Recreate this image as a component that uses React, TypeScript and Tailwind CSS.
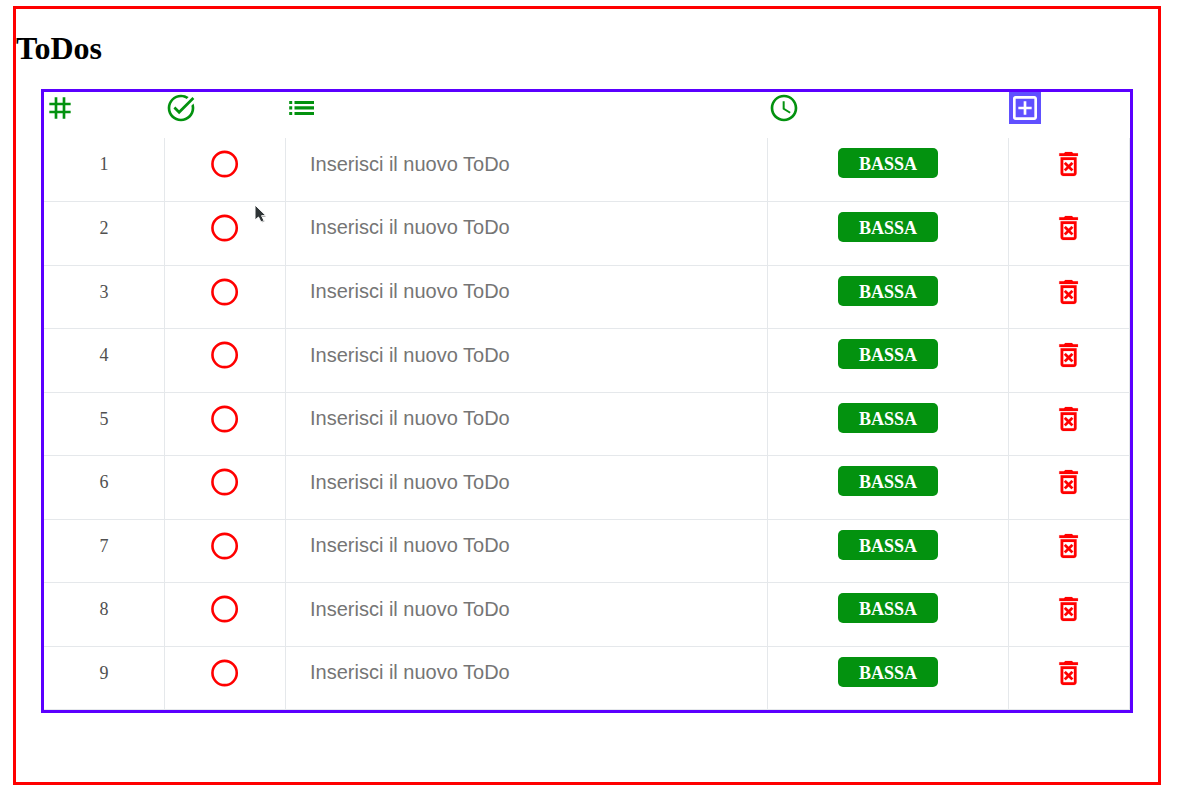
import { MdTag, MdTaskAlt, MdSchedule, MdOutlineAddBox } from "react-icons/md";

type Todo = { id: number; height: string; textShift: string };

const todos: Todo[] = [
  { id: 1, height: "h-16", textShift: "pt-2.5" },
  { id: 2, height: "h-16", textShift: "pt-[9px]" },
  { id: 3, height: "h-[63px]", textShift: "pt-[9px]" },
  { id: 4, height: "h-16", textShift: "pt-2.5" },
  { id: 5, height: "h-[63px]", textShift: "pt-[9px]" },
  { id: 6, height: "h-16", textShift: "pt-2.5" },
  { id: 7, height: "h-[63px]", textShift: "pt-[9px]" },
  { id: 8, height: "h-16", textShift: "pt-2.5" },
  { id: 9, height: "h-[63px]", textShift: "pt-[9px]" },
];

function ListIcon() {
  return (
    <svg viewBox="0 0 32 32" className="size-8" fill="currentColor">
      <path d="M3.200 9h3v3h-3zM3.200 14.300h3v3.200h-3zM3.200 20h3v3h-3zM8.500 9H28v3H8.500zM8.500 14.300H28v3.200H8.500zM8.500 20H28v3H8.500z" />
    </svg>
  );
}

function CircleIcon() {
  return (
    <svg viewBox="0 0 32 32" className="size-8" fill="none" stroke="currentColor">
      <circle cx="15.600" cy="16" r="12.150" strokeWidth="2.600" />
    </svg>
  );
}

function DeleteIcon() {
  return (
    <svg viewBox="0.3 0 24 24" className="size-8" fill="currentColor" stroke="currentColor" strokeWidth="0.12">
      <path d="M14.120 10.470 12 12.590l-2.130-2.120-1.410 1.410L10.590 14l-2.120 2.120 1.410 1.410L12 15.410l2.120 2.120 1.410-1.410L13.410 14l2.120-2.120zM15.500 4l-1-1h-5l-1 1H5v2h14V4zM6 19c0 1.100.9 2 2 2h8c1.100 0 2-.9 2-2V7H6zM8 9h8v10H8z" />
    </svg>
  );
}

function Row({ todo }: { todo: Todo }) {
  const cell = "flex justify-center border-r border-b border-[#e5e8eb] pt-2.5";
  return (
    <div className={`grid grid-cols-[121px_121px_482px_241px_121px] ${todo.height}`}>
      <div className={`${cell} text-lg leading-8 text-[#505050]`}>{todo.id}</div>
      <div className={`${cell} text-[#ff0000]`}>
        <CircleIcon />
      </div>
      <div className={`border-r border-b border-[#e5e8eb] pl-6 ${todo.textShift}`}>
        <input
          className="block h-8 w-[430px] font-['Liberation_Sans',Arial,sans-serif] text-xl outline-none placeholder:text-[#757575]"
          placeholder="Inserisci il nuovo ToDo"
        />
      </div>
      <div className={cell}>
        <button className="h-[30px] w-[100px] rounded-[5px] bg-[#03920f] pt-px text-lg leading-[30px] font-bold text-white">BASSA</button>
      </div>
      <div className={`${cell} text-[#ff0000]`}>
        <DeleteIcon />
      </div>
    </div>
  );
}

export default function App() {
  return (
    <div className="h-[800px] w-[1200px] overflow-hidden bg-white pt-1.5 pl-[13px] font-['Liberation_Serif','Times_New_Roman',serif]">
      <main className="h-[779px] w-[1148px] border-3 border-[#ff0000]">
        <h1 className="pt-[21px] text-[32px] leading-[37px] font-bold text-black">ToDos</h1>
        <section className="mt-[22px] ml-[25px] h-[624px] w-[1092px] overflow-hidden border-3 border-[#5b00ff]">
          <header className="grid h-[46px] grid-cols-[121px_121px_482px_241px_121px] text-[#03920f]">
            <MdTag className="size-8" />
            <MdTaskAlt className="size-8" />
            <ListIcon />
            <MdSchedule className="size-8" />
            <button className="size-8 bg-[#6050ff] text-white">
              <MdOutlineAddBox className="size-8" />
            </button>
          </header>
          {todos.map((todo) => (
            <Row key={todo.id} todo={todo} />
          ))}
        </section>
      </main>
      <svg viewBox="0 0 16 24" className="absolute top-[203px] left-[252px] h-6 w-4">
        <path d="M3 2v15l3.500-3 2.500 5 3-1.300-2.400-5H14z" fill="#2e3436" stroke="#fff" />
        <path d="M9.500 13.500h4M10 19l2.500-1" fill="none" stroke="#b5b5b5" />
      </svg>
    </div>
  );
}
